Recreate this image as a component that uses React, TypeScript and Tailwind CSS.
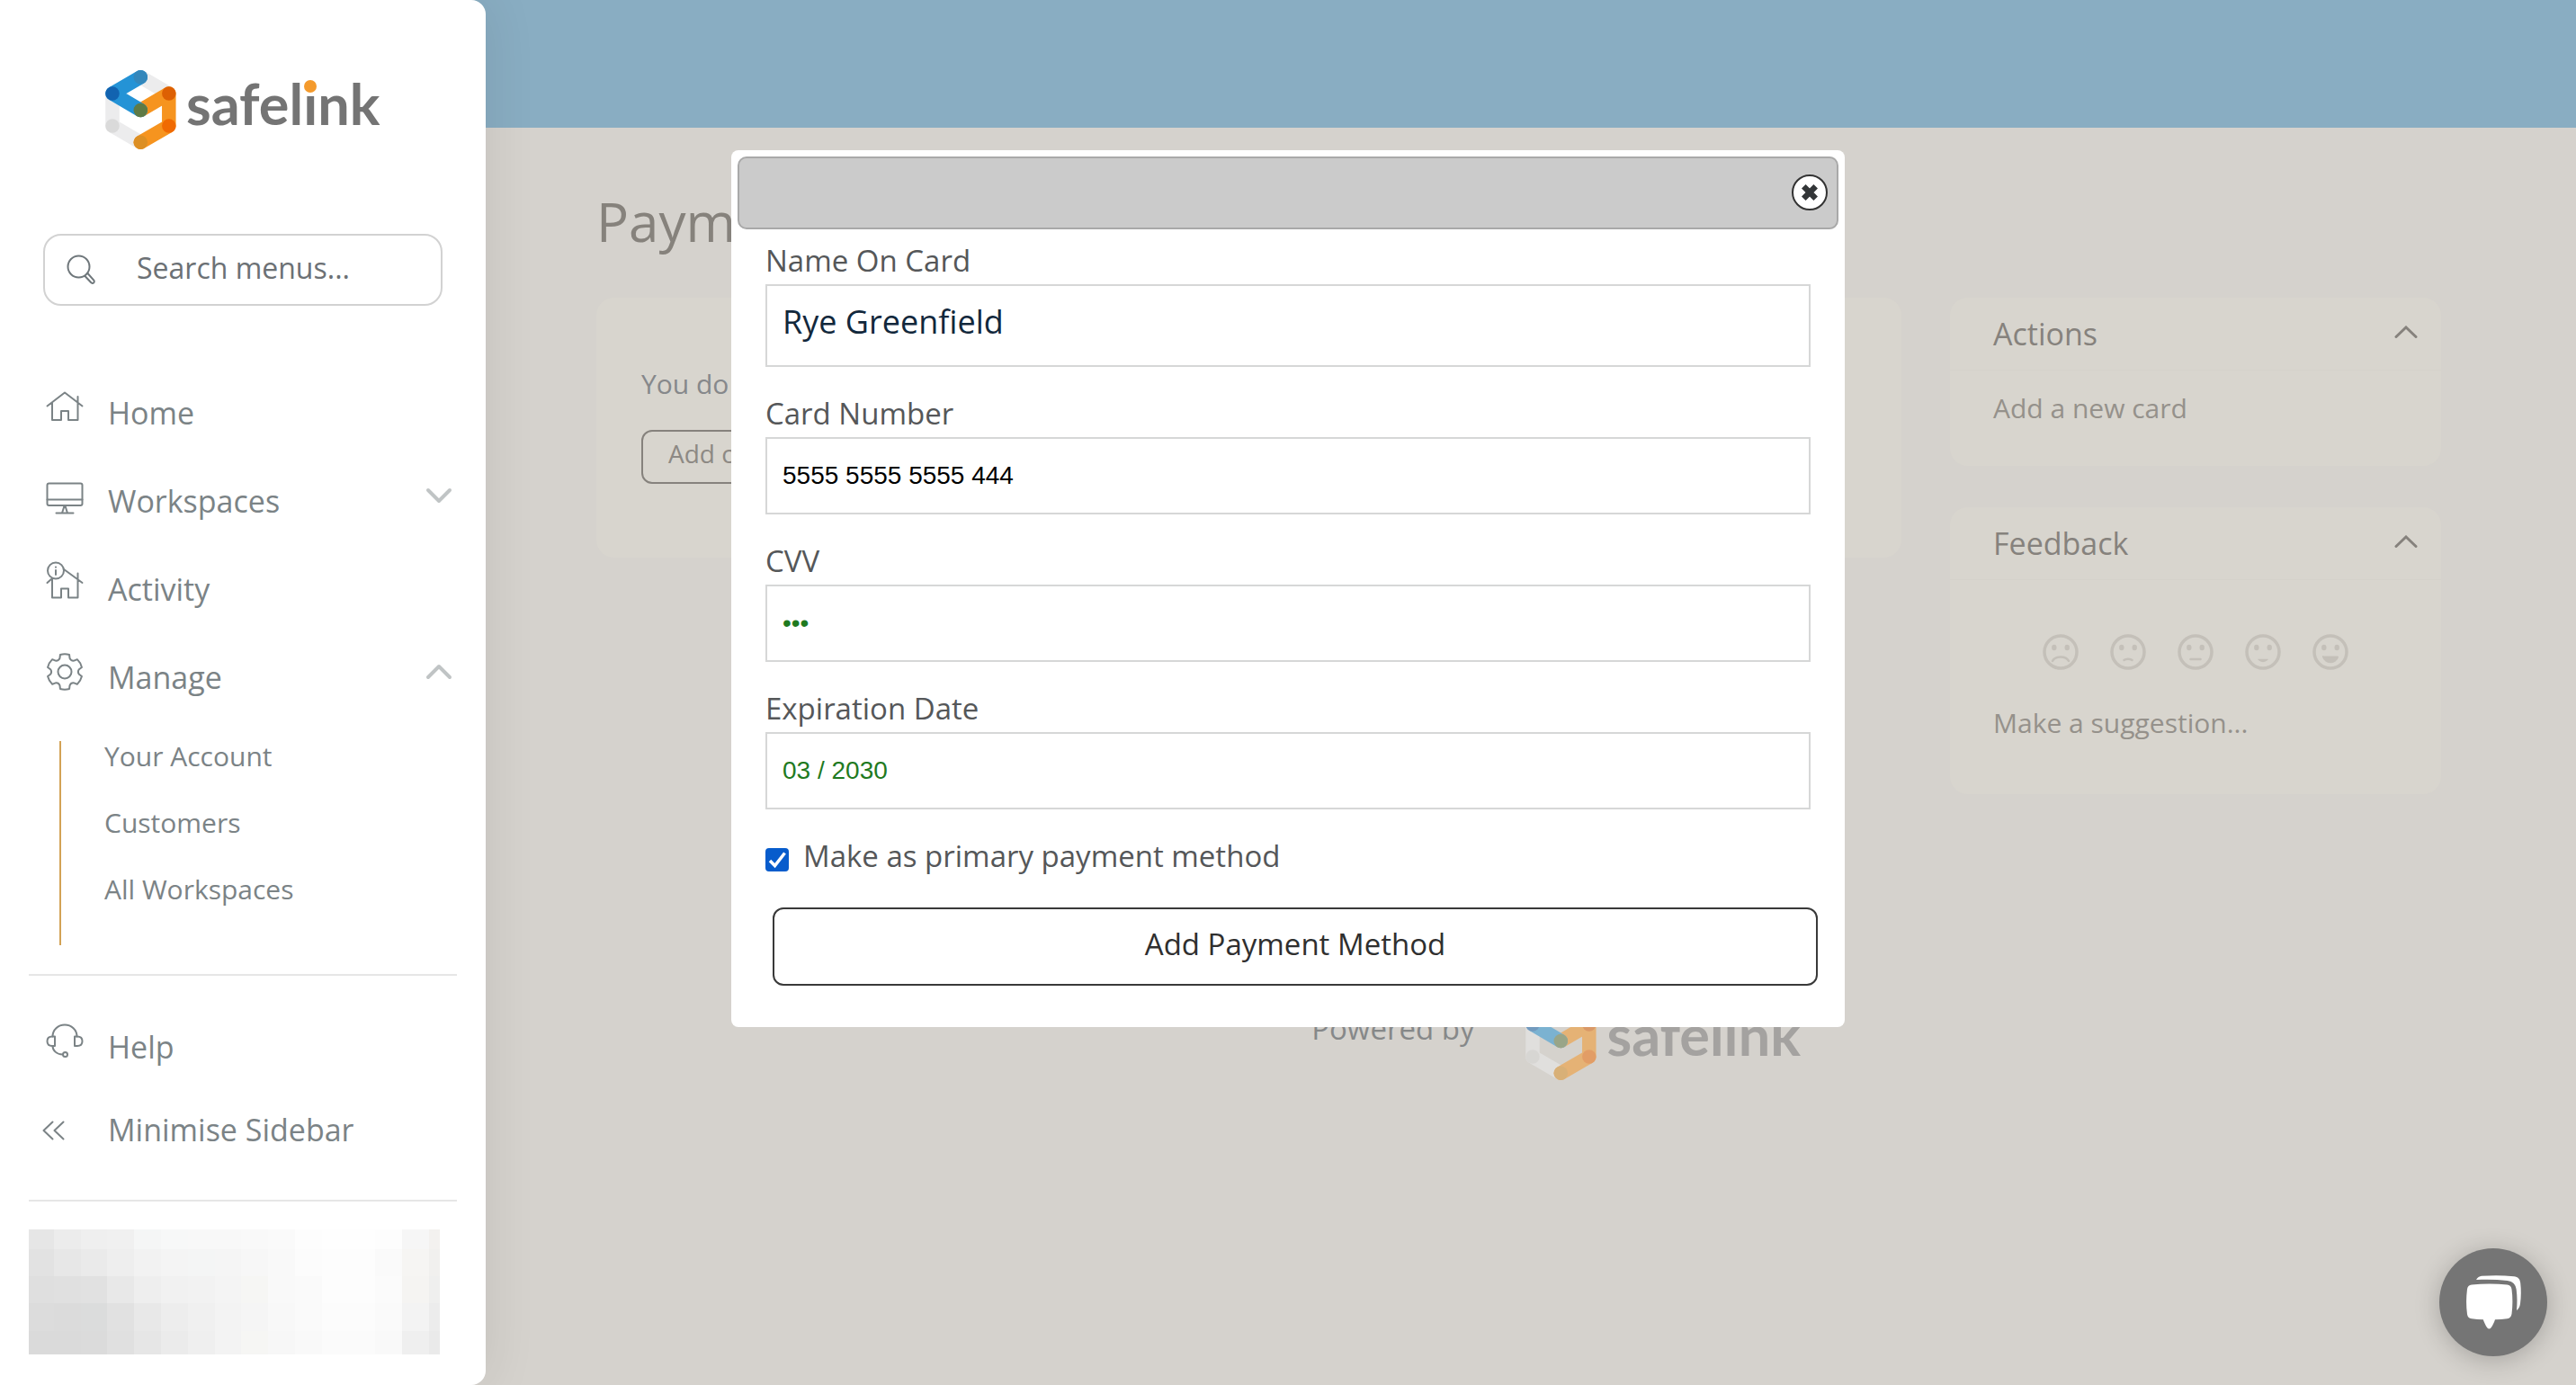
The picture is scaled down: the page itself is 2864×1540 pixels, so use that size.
import { useState } from "react";
import type { ReactNode } from "react";

/* ---------- Icons ---------- */

function NavIcon({ children }: { children: ReactNode }) {
  return (
    <svg
      viewBox="0 0 40 48"
      className="mb-3 h-12 w-10 shrink-0 overflow-visible"
      fill="none"
      stroke="currentColor"
      strokeWidth="2"
      strokeLinecap="round"
      strokeLinejoin="round"
      aria-hidden="true"
    >
      {children}
    </svg>
  );
}

function HomeIcon() {
  return (
    <NavIcon>
      <path d="M0.5 22.5 20 7.5l19.5 15M6 18.5V38h10V28h8v10h10.5V18.5M34.5 12v6.5" />
    </NavIcon>
  );
}

function MonitorIcon() {
  return (
    <NavIcon>
      <rect x="0.5" y="10.5" width="39" height="24.5" rx="2" />
      <path d="M0.5 28.5h39M19.5 35.5 17 43.5M20.5 35.5l2.5 8M10.5 43.5h19" />
    </NavIcon>
  );
}

function ActivityIcon() {
  return (
    <NavIcon>
      <circle cx="10" cy="9.5" r="9" />
      <path d="M10 9v5M10 5.6v.2" />
      <path d="M19 8l20.500 15M0.500 23l4.500-4M6 18.500V39.500h10V29.500h8v10h10.500V19.500M34.500 12.500v7" />
    </NavIcon>
  );
}

function polar(radius: number, degrees: number) {
  const a = (degrees * Math.PI) / 180;
  return `${(20 + radius * Math.cos(a)).toFixed(2)} ${(24 + radius * Math.sin(a)).toFixed(2)}`;
}

const gearPath =
  [30, 90, 150, 210, 270, 330]
    .map(
      (a, i) =>
        `${i === 0 ? "M" : "L"}${polar(19.6, a - 15)}Q${polar(20.4, a)} ${polar(19.6, a + 15)}L${polar(16.2, a + 20)}Q${polar(13.8, a + 30)} ${polar(16.2, a + 40)}`,
    )
    .join("") + "Z";

function GearIcon() {
  return (
    <NavIcon>
      <path d={gearPath} />
      <circle cx="20" cy="24" r="7.5" />
    </NavIcon>
  );
}

function HeadsetIcon() {
  return (
    <NavIcon>
      <path d="M6.500 18V18.500C6.500 11 12.500 5.500 20 5.500S33.500 11 33.500 18.500" />
      <path d="M9 18.500v10.500H6c-3.500 0-5.500-2-5.500-5.200S2.500 18.500 6 18.500zM31 18.500v10.500h3c3.500 0 5.500-2 5.500-5.200s-2-5.300-5.500-5.300zM6.500 29c0 5 4.500 9.500 11 9.500" />
      <circle cx="20.500" cy="38.500" r="2.500" />
    </NavIcon>
  );
}

function DoubleLeftIcon() {
  return (
    <NavIcon>
      <path d="M6.500 21.500-3.500 31l10 9.500M18.500 21.500 8.500 31l10 9.500" />
    </NavIcon>
  );
}

function SearchIcon() {
  return (
    <svg viewBox="0 0 34 34" className="h-[34px] w-[34px] shrink-0" fill="none" stroke="#6f777b" strokeWidth="2" strokeLinecap="round" aria-hidden="true">
      <circle cx="13.500" cy="13.500" r="12" />
      <path d="M20.500 24l6.800 7.200a1.900 1.900 0 0 0 3-2.600L23.500 21" />
    </svg>
  );
}

function Chevron({ up = false }: { up?: boolean }) {
  return (
    <svg viewBox="0 0 28 16" className="mb-3 ml-auto h-4 w-7 overflow-visible" fill="none" stroke="#c0c4c5" strokeWidth="4" strokeLinecap="round" strokeLinejoin="round" aria-hidden="true">
      <path d={up ? "M2 14 14 2l12 12" : "M2 2l12 12L26 2"} />
    </svg>
  );
}

function PanelChevron() {
  return (
    <svg viewBox="0 0 26 14" className="mb-1 h-[14px] w-[26px]" fill="none" stroke="#86827d" strokeWidth="3" strokeLinecap="round" aria-hidden="true">
      <path d="M2 12.500 13 2l11 10.500" />
    </svg>
  );
}

function Logo() {
  return (
    <div className="flex gap-[11px]">
      <svg viewBox="0 0 79 88" className="h-[88px] w-[79px] shrink-0" aria-hidden="true">
        <g fill="none" strokeWidth="15.500" strokeLinecap="round" strokeLinejoin="round">
          <path d="M39.300 7.800 70.800 26M8 26v36l31.300 18.200" stroke="#ececed" />
          <path d="M70.800 62 39.300 80.200M39.300 44.500 70.800 26v36" stroke="#f6941f" />
          <path d="M39.300 7.800 8 26l31.300 18.500" stroke="#2493d6" />
        </g>
        <circle cx="39.300" cy="7.800" r="7.750" fill="#3487bb" />
        <circle cx="8" cy="26" r="7.750" fill="#1263b0" />
        <circle cx="39.300" cy="44.500" r="7.750" fill="#5f7a45" />
        <circle cx="70.800" cy="26" r="7.750" fill="#dd6003" />
        <circle cx="70.800" cy="62" r="7.750" fill="#f06a02" />
        <circle cx="39.300" cy="80.200" r="7.750" fill="#dc8f24" />
        <circle cx="8" cy="62" r="7.750" fill="#dadada" />
      </svg>
      <span className="font-['Lato',sans-serif] text-[63px] leading-[74px] font-bold text-[#747474]">
        safel
        <span className="relative">
          i
          <span className="absolute top-3 left-1/2 h-[14px] w-[14px] -translate-x-1/2 rounded-full bg-[#f49a2c]" />
        </span>
        nk
      </span>
    </div>
  );
}

/* ---------- Sidebar ---------- */

const avatarRows = [
  ["#e6e6e6", "#ececec", "#efefef", "#f0f0f0", "#f5f6f6", "#f7f8f8", "#f8f8f8", "#f8f8f8", "#f9f9f9", "#fafafa", "#fdfdfd", "#fefefe", "#fefefe", "#fdfdfd", "#f6f6f6", "#f3f1ef"],
  ["#e2e2e2", "#e7e7e7", "#eaeaea", "#eeeeee", "#f2f2f2", "#f4f4f4", "#f4f5f5", "#f5f5f5", "#f7f7f7", "#f9f9f9", "#fcfcfc", "#fdfdfd", "#fdfdfd", "#fafafa", "#f6f5f3", "#f1f0ee"],
  ["#dfdfdf", "#e0e0e0", "#e1e1e1", "#e8e8e8", "#eeeeee", "#f1f1f1", "#f2f2f2", "#f4f4f4", "#f6f6f4", "#f9f9f9", "#fafafa", "#fdfdfd", "#fdfdfd", "#fbfbfb", "#f5f4f2", "#efefee"],
  ["#dcdcdc", "#dbdbdb", "#dbdcdc", "#e1e1e1", "#e8e8e8", "#ededed", "#f0f0f0", "#f3f3f3", "#f5f5f5", "#f8f8f8", "#fafafa", "#fcfcfc", "#fcfcfc", "#fafafa", "#f3f3f3", "#ececec"],
  ["#dadada", "#dadada", "#dbdbdb", "#e0e0e0", "#e6e6e6", "#ebebeb", "#efefef", "#f3f3f3", "#f6f6f4", "#f7f7f7", "#f9f9f9", "#fbfbfb", "#fbfbfb", "#f9f9f9", "#efefef", "#eaeaea"],
];

function NavItem({ icon, label, trailing, short = false }: { icon: ReactNode; label: string; trailing?: ReactNode; short?: boolean }) {
  return (
    <a href="#" className={`flex items-center gap-7 pr-[38px] pl-[52px] text-[34px] leading-[48px] ${short ? "h-[86px]" : "h-[98px]"}`}>
      {icon}
      {label}
      {trailing}
    </a>
  );
}

function Sidebar() {
  return (
    <aside className="relative z-10 w-[540px] shrink-0 rounded-r-2xl bg-white pt-[78px] text-[#7b8386] shadow-[0_0_60px_rgba(0,0,0,0.09)]">
      <div className="pl-[117px]">
        <Logo />
      </div>
      <label className="mx-12 mt-[94px] flex h-20 items-center gap-11 rounded-[20px] border-2 border-[#d2d2d2] px-6">
        <SearchIcon />
        <input
          type="text"
          aria-label="Search menus"
          placeholder="Search menus..."
          className="mb-1 w-full min-w-0 bg-transparent text-[32px] leading-[44px] outline-none placeholder:text-[#6c7175]"
        />
      </label>
      <nav className="mt-[70px]">
        <NavItem icon={<HomeIcon />} label="Home" />
        <NavItem icon={<MonitorIcon />} label="Workspaces" trailing={<Chevron />} />
        <NavItem icon={<ActivityIcon />} label="Activity" />
        <NavItem icon={<GearIcon />} label="Manage" trailing={<Chevron up />} />
        <ul className="mt-[22px] ml-[66px] flex flex-col gap-11 border-l-2 border-[#d3a255] pt-0.5 pb-[47px] pl-12 text-[30px] leading-[30px]">
          <li><a href="#">Your Account</a></li>
          <li><a href="#">Customers</a></li>
          <li><a href="#">All Workspaces</a></li>
        </ul>
        <hr className="mx-8 mt-8 mb-[30px] border-t-2 border-[#e6e6e6]" />
        <NavItem icon={<HeadsetIcon />} label="Help" />
        <NavItem icon={<DoubleLeftIcon />} label="Minimise Sidebar" short />
      </nav>
      <hr className="mx-8 mt-[35px] mb-[31px] border-t-2 border-[#e6e6e6]" />
      <div className="mr-[51px] ml-8 grid h-[139px] grid-cols-[28fr_repeat(14,30fr)_12fr] grid-rows-[22fr_30fr_30fr_31fr_26fr]">
        {avatarRows.flatMap((row, y) => row.map((color, x) => <div key={`${y}-${x}`} style={{ backgroundColor: color }} />))}
      </div>
    </aside>
  );
}

/* ---------- Page behind the dialog ---------- */

function Panel({ title, children }: { title: string; children: ReactNode }) {
  return (
    <section className="rounded-[20px] bg-[#d8d5ce]">
      <button type="button" className="flex h-[81px] w-full items-center justify-between border-b border-[#d5d2cb] pr-[26px] pl-12 text-[34px] leading-[44px] text-[#86827d]">
        {title}
        <PanelChevron />
      </button>
      {children}
    </section>
  );
}

const faces = [
  { name: "Very unhappy", mouth: <path d="M11 30c3-6 15-6 18 0" fill="none" strokeWidth="2.500" /> },
  { name: "Unhappy", mouth: <path d="M15.500 29c2-1.700 7-1.700 9 0" fill="none" strokeWidth="2.500" /> },
  { name: "Neutral", mouth: <path d="M14.500 28h11" fill="none" strokeWidth="2.500" /> },
  { name: "Happy", mouth: <path d="M15.500 28.500c2 2.500 7 2.500 9 0z" strokeWidth="1.500" /> },
  { name: "Very happy", mouth: <path d="M11.500 25h17c-1.500 9-15.500 9-17 0z" strokeWidth="1" /> },
];

function Page() {
  return (
    <main className="-ml-5 min-w-0 flex-1">
      <header className="h-[142px] bg-[#89adc2]" />
      <div className="pt-16 pr-[150px] pl-[143px]">
        <h1 className="text-[60px] leading-[80px] text-[#86827c]">Payment Methods</h1>
        <div className="mt-[45px] flex items-start gap-[54px]">
          <section className="min-w-0 flex-1 rounded-[20px] bg-[#d8d5ce] px-[50px] pt-[76px] pb-[82px]">
            <p className="text-[30px] leading-[40px] text-[#86888b]">You do not have any cards</p>
            <button type="button" className="mt-[31px] h-[60px] rounded-xl border-2 border-[#86827d] px-7 pb-2 text-[28px] leading-[40px] text-[#8d8984]">
              Add card
            </button>
          </section>
          <div className="flex w-[546px] shrink-0 flex-col gap-[46px]">
            <Panel title="Actions">
              <a href="#" className="block px-12 pt-[22px] pb-11 text-[30px] leading-[40px] text-[#95918b]">Add a new card</a>
            </Panel>
            <Panel title="Feedback">
              <div className="flex justify-center gap-[35px] pt-[60px]">
                {faces.map((face) => (
                  <button key={face.name} type="button" aria-label={face.name}>
                    <svg viewBox="0 0 40 40" className="block h-10 w-10" fill="#c4c0b9" stroke="#c4c0b9" strokeLinecap="round" aria-hidden="true">
                      <circle cx="20" cy="20" r="18" fill="none" strokeWidth="3.500" />
                      <ellipse cx="12.800" cy="15" rx="2.700" ry="3.200" stroke="none" />
                      <ellipse cx="27.200" cy="15" rx="2.700" ry="3.200" stroke="none" />
                      {face.mouth}
                    </svg>
                  </button>
                ))}
              </div>
              <a href="#" className="mt-[39px] block px-12 pb-[59px] text-[30px] leading-[40px] text-[#95918b]">Make a suggestion...</a>
            </Panel>
          </div>
        </div>
        <footer className="mt-[230px] flex items-start justify-center gap-[57px] pl-[83px] text-[33px] leading-[62px] text-[#868889]">
          Powered by
          <div className="opacity-50">
            <Logo />
          </div>
        </footer>
      </div>
    </main>
  );
}

/* ---------- Dialog ---------- */

function Field({ id, label, value, type = "text", inputClass }: { id: string; label: string; value: string; type?: string; inputClass: string }) {
  return (
    <div className="flex flex-col gap-1">
      <label htmlFor={id}>{label}</label>
      <input id={id} type={type} defaultValue={value} className={`w-full border-2 border-[#d6d7d7] bg-white px-[17px] outline-none ${inputClass}`} />
    </div>
  );
}

function PaymentDialog({ onClose }: { onClose: () => void }) {
  return (
    <div className="fixed inset-0 z-20 flex items-start justify-center pt-[167px]">
      <form role="dialog" aria-label="Add payment method" className="w-[1238px] max-w-full rounded-lg bg-white p-[7px]" onSubmit={(e) => e.preventDefault()}>
        <div className="flex h-[81px] items-center justify-end rounded-[10px] border-2 border-[#a9a9a9] bg-[#cbcbcb] pr-2.5 pb-0.5">
          <button type="button" aria-label="Close" onClick={onClose} className="flex h-10 w-10 items-center justify-center rounded-full border-2 border-[#333] bg-white">
            <svg viewBox="0 0 18 18" className="h-[18px] w-[18px]" stroke="#333638" strokeWidth="6.500" aria-hidden="true">
              <path d="M2.300 2.300 15.700 15.700M15.700 2.300 2.300 15.700" />
            </svg>
          </button>
        </div>
        <div className="flex flex-col gap-[30px] px-[31px] pt-[13px] pb-[39px] text-[33px] leading-[44px] text-[#555759]">
          <Field id="name" label="Name On Card" value="Rye Greenfield" inputClass="h-[92px] pb-2.5 text-[36px] text-[#12283c]" />
          <Field id="number" label="Card Number" value="5555 5555 5555 444" inputClass="h-[86px] font-['Liberation_Sans',Arial,sans-serif] text-[28px] text-black" />
          <Field id="cvv" label="CVV" type="password" value="123" inputClass="h-[86px] font-['Liberation_Sans',Arial,sans-serif] text-[28px] text-[#1f7a1f]" />
          <Field id="expiry" label="Expiration Date" value="03 / 2030" inputClass="h-[86px] font-['Liberation_Sans',Arial,sans-serif] text-[28px] text-[#1f7a1f]" />
          <label className="flex items-center gap-4">
            <span className="relative mt-2 flex h-[26px] w-[26px]">
              <input type="checkbox" defaultChecked className="peer h-[26px] w-[26px] appearance-none rounded-[4px] border-2 border-[#767676] checked:border-[#075ccc] checked:bg-[#075ccc]" />
              <svg viewBox="0 0 26 26" className="pointer-events-none absolute inset-0 hidden peer-checked:block" fill="none" stroke="white" strokeWidth="3.500" aria-hidden="true">
                <path d="M5 14l5.500 5.500L21.500 5.500" />
              </svg>
            </span>
            Make as primary payment method
          </label>
          <button type="submit" className="mt-[5px] -mr-2 ml-2 h-[87px] rounded-xl border-2 border-[#393939] bg-white pb-1.5 text-[#2f2f2f]">
            Add Payment Method
          </button>
        </div>
      </form>
    </div>
  );
}

function ChatButton() {
  return (
    <button type="button" aria-label="Open chat" className="fixed right-8 bottom-8 z-30 h-[120px] w-[120px] rounded-full bg-[#757575] shadow-[0_4px_28px_rgba(0,0,0,0.22)]">
      <svg viewBox="0 0 120 120" className="h-full w-full" fill="white" aria-hidden="true">
        <path d="M36 40.500c13-1.500 27-1.500 39.500 0 3 .4 4.600 2.200 5 5 1.200 9 1.200 18.500 0 27.500-.4 3-2 4.800-5 5.200-4.500.6-9 .9-13.500 1-1 3.300-2.600 6.600-4.600 9.200-1 1.300-3 1.300-4 0-2-2.600-3.400-5.900-4.600-9.200-4.300-.1-8.500-.4-12.800-1-3-.4-4.600-2-5-5-1.200-9.200-1.200-18.500 0-27.700.4-3 2-4.600 5-5z" />
        <path d="M41 35c1.500-2.600 3.500-4 6-4.200 12-1 24-.9 36 .4 4.500.5 6.700 2.800 7.200 7.200.9 7.700.8 15.500-.2 23.200-.4 3.400-1.500 5.800-4 7.300.7-7.800.7-15.400-.3-23-.8-6-4-9.300-10-10-11.500-1.300-23-1.600-34.700-.9z" />
      </svg>
    </button>
  );
}

export default function App() {
  const [open, setOpen] = useState(true);
  return (
    <div className="flex min-h-screen bg-[#d5d2cd] font-['Open_Sans',sans-serif]">
      <Sidebar />
      <Page />
      {open && <PaymentDialog onClose={() => setOpen(false)} />}
      <ChatButton />
    </div>
  );
}
